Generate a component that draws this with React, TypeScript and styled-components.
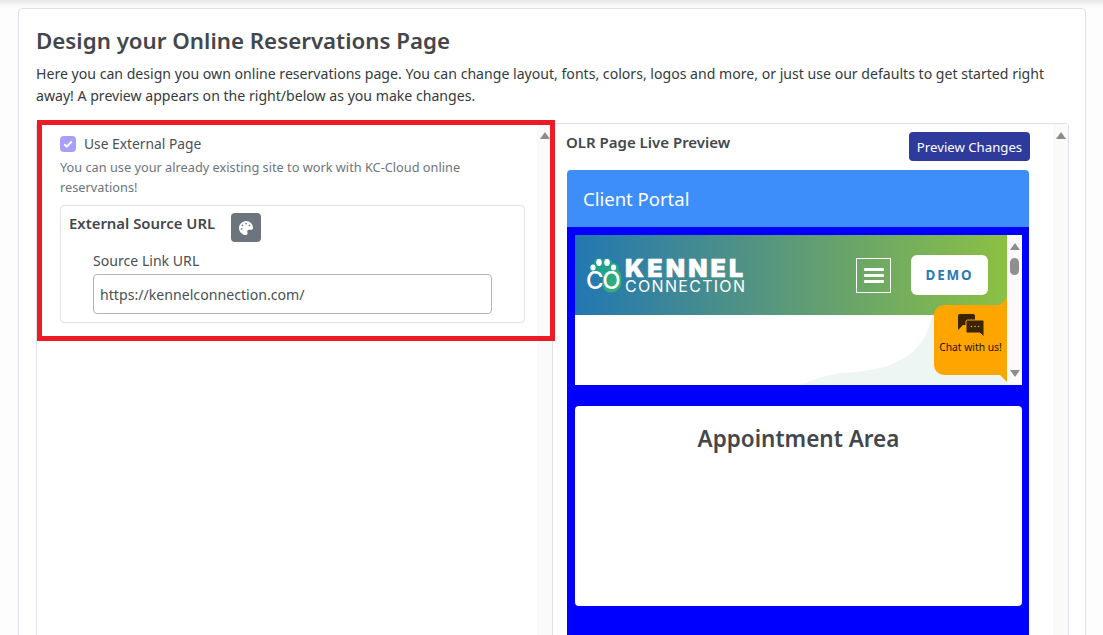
import styled, { createGlobalStyle } from "styled-components";
import { FaPalette } from "react-icons/fa";

const GlobalStyle = createGlobalStyle`
  html, body {
    margin: 0;
    padding: 0;
    height: 100%;
    overflow: hidden;
    background: #fdfdfd;
    font-family: "Noto Sans", "Open Sans", sans-serif;
  }
  * {
    box-sizing: border-box;
  }
`;

const Page = styled.div`
  height: 635px;
  overflow: hidden;
  padding: 8px 17px 0 18px;
  background: linear-gradient(#e6e6e6 0, #f7f7f7 5px, #fdfdfd 9px);
`;

const Card = styled.div`
  height: 700px;
  padding: 17px 16px 0 17px;
  background: #fff;
  border: 1px solid #dee2e6;
  border-radius: 4px;
`;

const Title = styled.h2`
  margin: 0;
  font-size: 22.3px;
  line-height: 29px;
  font-weight: 600;
  color: #43474c;
`;

const Intro = styled.p`
  margin: 8px 0 16px;
  font-size: 14.1px;
  line-height: 22px;
  color: #343a40;
`;

const Split = styled.div`
  position: relative;
  display: grid;
  grid-template-columns: 517px 516px;
  height: 600px;
`;

const Pane = styled.div`
  display: flex;
  border: 1px solid #dee2e6;
  border-left-width: ${(p: { $first?: boolean }) => (p.$first ? "1px" : "0")};
  border-radius: 0 4px 0 0;
`;

const PaneBody = styled.div`
  flex: 1;
  min-width: 0;
`;

const Track = styled.div`
  flex: none;
  width: 15px;
  padding-top: 8px;
  display: flex;
  justify-content: center;
  background: #fafafa;
`;

const ArrowUp = styled.div`
  width: 0;
  height: 0;
  border-left: 5px solid transparent;
  border-right: 5px solid transparent;
  border-bottom: 7px solid #8c8c8c;
`;

const Settings = styled.div`
  padding: 12px 12px 0 23px;
`;

const CheckRow = styled.label`
  display: flex;
  align-items: center;
  gap: 8px;
  height: 15px;
  font-size: 13.8px;
  color: #495057;
`;

const CheckBox = styled.span`
  display: flex;
  align-items: center;
  justify-content: center;
  flex: none;
  width: 16px;
  height: 16px;
  border-radius: 4px;
  background: #a7a0fb;
`;

const Help = styled.div`
  margin-top: 6px;
  font-size: 12.75px;
  line-height: 20px;
  color: #6c757d;
`;

const SourceBox = styled.div`
  margin-top: 8px;
  height: 118px;
  padding: 7px 32px 0 8px;
  border: 1px solid #dee2e6;
  border-radius: 4px;
`;

const SourceHead = styled.div`
  display: flex;
  align-items: flex-start;
  gap: 16px;
  font-size: 14.9px;
  line-height: 20px;
  font-weight: 600;
  color: #43474c;
`;

const IconButton = styled.div`
  display: flex;
  align-items: center;
  justify-content: center;
  width: 30px;
  height: 29px;
  border-radius: 4px;
  background: #6c757d;
  color: #fff;
  font-size: 14px;
`;

const Field = styled.div`
  margin: 9px 0 0 24px;
`;

const FieldLabel = styled.div`
  font-size: 14.1px;
  line-height: 20px;
  color: #495057;
`;

const TextInput = styled.input`
  display: block;
  width: 399px;
  height: 40px;
  margin-top: 3px;
  padding: 0 6px;
  border: 1px solid #b0b4b8;
  border-radius: 4px;
  background: #fff;
  font: 14.15px "Noto Sans", sans-serif;
  color: #495057;
`;

const Annotation = styled.div`
  position: absolute;
  left: 1px;
  top: -3px;
  width: 518px;
  height: 221px;
  border: 5px solid #ed1c24;
  pointer-events: none;
`;

const Preview = styled.div`
  padding: 8px 24px 0 13px;
`;

const PreviewHead = styled.div`
  display: flex;
  justify-content: space-between;
  align-items: flex-start;
  height: 38px;
  font-size: 15px;
  line-height: 20px;
  font-weight: 600;
  color: #43474c;
`;

const PreviewButton = styled.button`
  width: 121px;
  height: 29px;
  margin-top: 0;
  margin-right: -1px;
  padding: 0;
  border: 0;
  border-radius: 4px;
  background: #2f3b9c;
  color: #fff;
  font: 13.2px "Noto Sans", sans-serif;
`;

const PortalCard = styled.div`
  width: 462px;
  margin-left: 1px;
  border-radius: 4px 4px 0 0;
  overflow: hidden;
`;

const PortalHeader = styled.div`
  height: 57px;
  padding-left: 16px;
  display: flex;
  align-items: center;
  background: #3d8ef8;
  color: #fff;
  font-size: 18.5px;
`;

const PortalBody = styled.div`
  height: 420px;
  padding: 8px 7px 0 8px;
  background: #0000ff;
`;

const Frame = styled.div`
  display: flex;
  height: 150px;
  background: #fff;
`;

const FrameMain = styled.div`
  position: relative;
  flex: 1;
  min-width: 0;
  overflow: hidden;
`;

const SiteHeader = styled.div`
  display: flex;
  align-items: center;
  height: 80px;
  padding: 0 19px 0 11px;
  background: linear-gradient(90deg, #2277b2 0%, #5c9a78 50%, #8cc043 100%);
`;

const Logo = styled.div`
  display: flex;
  align-items: center;
  gap: 4px;
  flex: 1;
`;

const PawMark = styled.div`
  position: relative;
  width: 35px;
  height: 36px;
`;

const PawInitials = styled.span`
  position: absolute;
  left: 0;
  bottom: 1px;
  font: 500 24px/22px "Inter", sans-serif;
  letter-spacing: -1.4px;
  color: #fff;
`;

const LogoText = styled.div`
  display: flex;
  flex-direction: column;
  padding-top: 3px;
  color: #fff;
`;

const LogoBig = styled.span`
  font: 900 25px/19px "Inter", sans-serif;
  letter-spacing: 3.2px;
  -webkit-text-stroke: 0.5px #fff;
`;

const LogoSmall = styled.span`
  font: 400 16px/16px "Inter", sans-serif;
  letter-spacing: 1.3px;
`;

const Burger = styled.div`
  display: flex;
  flex-direction: column;
  justify-content: center;
  align-items: center;
  gap: 3px;
  width: 35px;
  height: 35px;
  margin-right: 20px;
  border: 1px solid #fff;
`;

const BurgerLine = styled.span`
  width: 20px;
  height: 3px;
  border-radius: 1px;
  background: #fff;
`;

const DemoButton = styled.div`
  width: 77px;
  height: 40px;
  display: flex;
  align-items: center;
  justify-content: center;
  border-radius: 6px;
  background: #fff;
  color: #2a7ab8;
  font-size: 13.4px;
  font-weight: 700;
  letter-spacing: 1.9px;
`;

const Wave = styled.svg`
  position: absolute;
  right: 0;
  bottom: 0;
`;

const ChatTab = styled.div`
  position: absolute;
  right: 0;
  top: 70px;
  width: 73px;
  height: 70px;
  padding-top: 9px;
  display: flex;
  flex-direction: column;
  align-items: center;
  gap: 3px;
  border-radius: 10px 0 0 10px;
  background: #ffa500;
  color: #1c1300;
  font-size: 10.3px;
  line-height: 14px;
`;

const ChatEar = styled.svg<{ $edge: "top" | "bottom" }>`
  position: absolute;
  right: 0;
  ${(p) => p.$edge}: -7px;
`;

const FrameTrack = styled.div`
  position: relative;
  flex: none;
  width: 15px;
  padding-top: 8px;
  display: flex;
  flex-direction: column;
  align-items: center;
  justify-content: space-between;
  background: #fafafa;
`;

const Thumb = styled.div`
  position: absolute;
  top: 23px;
  left: 3px;
  width: 9px;
  height: 17px;
  border-radius: 5px;
  background: #8f8f8f;
`;

const ArrowDown = styled.div`
  width: 0;
  height: 0;
  margin-bottom: 8px;
  border-left: 5px solid transparent;
  border-right: 5px solid transparent;
  border-top: 7px solid #8c8c8c;
`;

const Appointment = styled.div`
  height: 200px;
  margin-top: 21px;
  padding-top: 17px;
  border-radius: 4px;
  background: #fff;
  text-align: center;
  font-size: 22.5px;
  line-height: 32px;
  font-weight: 600;
  color: #43474c;
`;

function App() {
  return (
    <>
      <GlobalStyle />
      <Page>
        <Card>
          <Title>Design your Online Reservations Page</Title>
          <Intro>
            Here you can design you own online reservations page. You can change layout, fonts, colors, logos and more,
            or just use our defaults to get started right away! A preview appears on the right/below as you make changes.
          </Intro>
          <Split>
            <Pane $first>
              <PaneBody>
                <Settings>
                  <CheckRow>
                    <CheckBox>
                      <svg width="10" height="8" viewBox="0 0 10 8">
                        <path d="M1.2 4.2 3.8 6.6 8.8 1.4" fill="none" stroke="#fff" strokeWidth="2" />
                      </svg>
                    </CheckBox>
                    Use External Page
                  </CheckRow>
                  <Help>You can use your already existing site to work with KC-Cloud online reservations!</Help>
                  <SourceBox>
                    <SourceHead>
                      External Source URL
                      <IconButton>
                        <FaPalette />
                      </IconButton>
                    </SourceHead>
                    <Field>
                      <FieldLabel>Source Link URL</FieldLabel>
                      <TextInput readOnly value="https://kennelconnection.com/" />
                    </Field>
                  </SourceBox>
                </Settings>
              </PaneBody>
              <Track>
                <ArrowUp />
              </Track>
            </Pane>
            <Pane>
              <PaneBody>
                <Preview>
                  <PreviewHead>
                    OLR Page Live Preview
                    <PreviewButton>Preview Changes</PreviewButton>
                  </PreviewHead>
                  <PortalCard>
                    <PortalHeader>Client Portal</PortalHeader>
                    <PortalBody>
                      <Frame>
                        <FrameMain>
                          <SiteHeader>
                            <Logo>
                              <PawMark>
                                <svg width="35" height="36" viewBox="0 0 35 36">
                                  <defs>
                                    <linearGradient id="pawFill" x1="0" y1="0" x2="1" y2="1">
                                      <stop offset="0" stopColor="#119a9a" />
                                      <stop offset="1" stopColor="#3cb371" />
                                    </linearGradient>
                                  </defs>
                                  <path
                                    d="M4 12a4 4 0 0 1 4-5 5 5 0 0 1 9-4 5 5 0 0 1 9 3 5 5 0 0 1 6 7 9 9 0 0 1 3 11 10 10 0 0 1-15 10 10 10 0 0 1-3-12 9 9 0 0 0-9-6 4 4 0 0 1-4-4z"
                                    fill="url(#pawFill)"
                                  />
                                  <ellipse cx="7" cy="10.5" rx="2.6" ry="3" fill="#fff" />
                                  <ellipse cx="13" cy="5.5" rx="2.8" ry="3.4" fill="#fff" />
                                  <ellipse cx="21" cy="5.5" rx="2.8" ry="3.4" fill="#fff" />
                                  <ellipse cx="27.5" cy="10.5" rx="2.6" ry="3" fill="#fff" />
                                </svg>
                                <PawInitials>CO</PawInitials>
                              </PawMark>
                              <LogoText>
                                <LogoBig>KENNEL</LogoBig>
                                <LogoSmall>CONNECTION</LogoSmall>
                              </LogoText>
                            </Logo>
                            <Burger>
                              <BurgerLine />
                              <BurgerLine />
                              <BurgerLine />
                            </Burger>
                            <DemoButton>DEMO</DemoButton>
                          </SiteHeader>
                          <Wave width="207" height="70" viewBox="0 0 207 70">
                            <path d="M0 70C14 64 26 60 40 58 95 56 125 40 132 0H207V70Z" fill="#eef6f4" />
                          </Wave>
                          <ChatTab>
                            <ChatEar $edge="top" width="8" height="8" viewBox="0 0 8 8">
                              <path d="M8 0V8H0Z" fill="#ffa500" />
                            </ChatEar>
                            <svg width="26" height="23" viewBox="0 0 26 23">
                              <path d="M0 1.5Q0 0 1.5 0H15Q17 0 17 2V11H5L0 16Z" fill="#3a2500" />
                              <path d="M8 7.5Q8 6 9.5 6H24.5Q26 6 26 7.5V23L22 19H9.5Q8 19 8 17.5Z" fill="#3a2500" stroke="#ffa500" strokeWidth="1" />
                              <circle cx="13.5" cy="12.5" r="0.8" fill="#ffa500" />
                              <circle cx="17" cy="12.5" r="0.8" fill="#ffa500" />
                              <circle cx="20.5" cy="12.5" r="0.8" fill="#ffa500" />
                            </svg>
                            Chat with us!
                            <ChatEar $edge="bottom" width="8" height="8" viewBox="0 0 8 8">
                              <path d="M0 0H8V8Z" fill="#ffa500" />
                            </ChatEar>
                          </ChatTab>
                        </FrameMain>
                        <FrameTrack>
                          <ArrowUp />
                          <Thumb />
                          <ArrowDown />
                        </FrameTrack>
                      </Frame>
                      <Appointment>Appointment Area</Appointment>
                    </PortalBody>
                  </PortalCard>
                </Preview>
              </PaneBody>
              <Track>
                <ArrowUp />
              </Track>
            </Pane>
            <Annotation />
          </Split>
        </Card>
      </Page>
    </>
  );
}

export default App;
